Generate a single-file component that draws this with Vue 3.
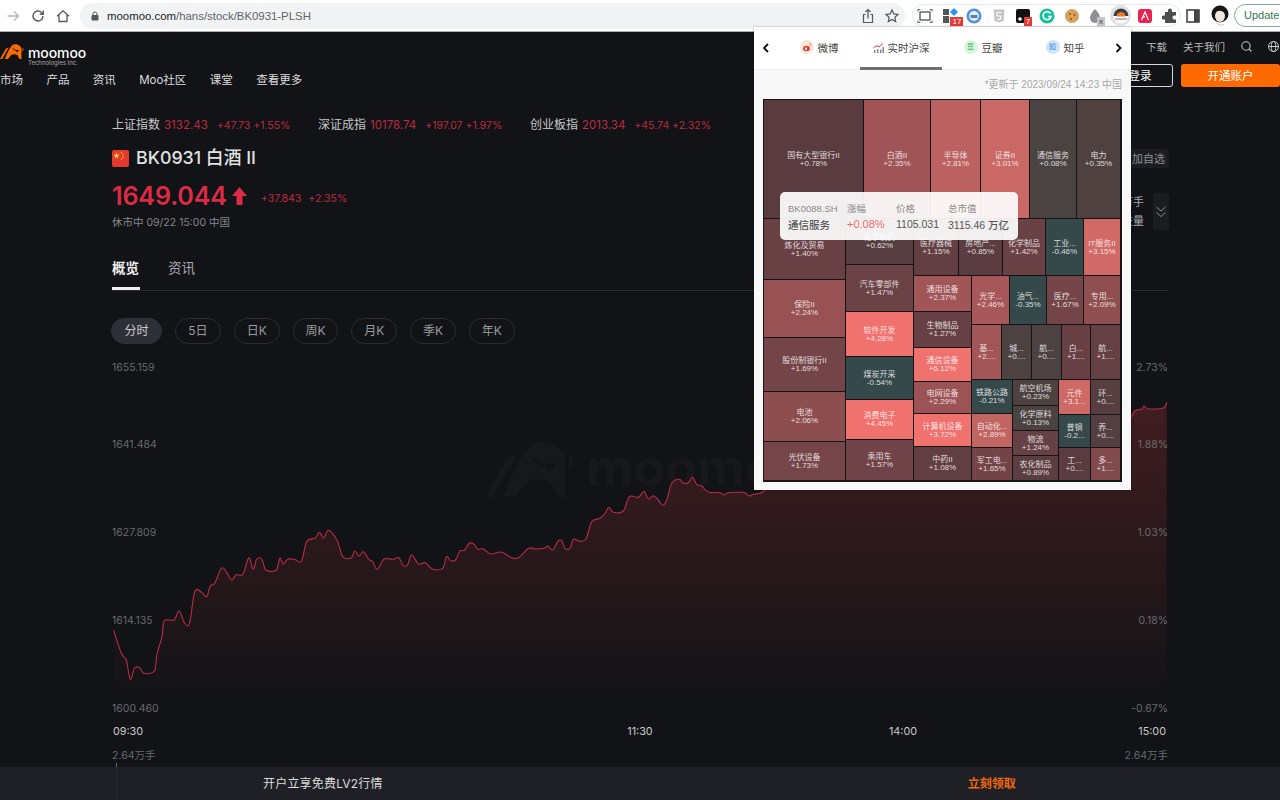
<template>
  <div class="page">
    <svg class="defs" width="0" height="0">
      <symbol id="bull" viewBox="0 0 272 175">
        <path d="M0 172L25 172L100 40L65 55Z" />
        <path fill-rule="evenodd" d="M55 172C75 120 100 60 130 25C150 3 190 -3 225 25C235 35 240 42 243 50L243 172L220 172L200 130C180 115 150 115 130 125L90 172ZM145 40C150 70 185 75 215 68L205 88L190 98L185 80C160 78 140 65 145 40Z" />
        <path d="M255 45C272 55 272 75 250 92C255 75 258 60 255 45Z" />
      </symbol>
    </svg>

    <!-- browser toolbar -->
    <div class="toolbar">
      <svg class="tb-nav" width="16" height="16" viewBox="0 0 16 16" fill="none" stroke="#b4b6b9" stroke-width="1.3"><path d="M2.5 8h11M9 3.5L13.5 8 9 12.5" /></svg>
      <svg class="tb-nav" width="16" height="16" viewBox="0 0 16 16" fill="none" stroke="#55585c" stroke-width="1.4"><path d="M13 8a5 5 0 1 1-1.5-3.6L13 6" /><path d="M13.3 2.6V6.2H9.8" /></svg>
      <svg class="tb-nav" width="16" height="16" viewBox="0 0 16 16" fill="none" stroke="#55585c" stroke-width="1.3"><path d="M2 8.2L8 2.8l6 5.4M4 7v6.5h8V7" /></svg>
      <div class="omnibox">
        <svg width="10" height="10" viewBox="0 0 10 10"><rect x="1.5" y="4" width="7" height="5.5" rx="1" fill="#55585c" /><path d="M3 4.5V3a2 2 0 0 1 4 0v1.5" fill="none" stroke="#55585c" stroke-width="1" /></svg>
        <span class="url"><b>moomoo.com</b>/hans/stock/BK0931-PLSH</span>
        <div class="omni-actions">
          <svg width="16" height="16" viewBox="0 0 16 16" fill="none" stroke="#55585c" stroke-width="1.2"><path d="M8 10.5V1.5M5.4 4L8 1.5 10.6 4M5.5 6.5H3.5v8h9v-8h-2" /></svg>
          <svg width="16" height="16" viewBox="0 0 16 16" fill="none" stroke="#55585c" stroke-width="1.2"><path d="M8 2l1.8 3.9 4.2.5-3.1 2.9.8 4.2L8 11.4l-3.7 2.1.8-4.2L2 6.400l4.2-.5z" /></svg>
        </div>
      </div>
      <div class="ext-pill">
        <span class="ext"><svg width="16" height="16" viewBox="0 0 16 16" fill="none"><rect x="3" y="4" width="10" height="8" stroke="#444" stroke-width="1.2" /><path d="M1 3.500V1.500h2.500M12.500 1.500H15v2M1 12.500v2h2.500M12.500 14.500H15v-2" stroke="#2f8f4f" stroke-width="1.2" /></svg></span>
        <span class="ext"><svg width="16" height="16" viewBox="0 0 16 16"><rect x="1" y="1" width="6" height="6" fill="#555" /><rect x="1" y="8" width="6" height="7" fill="#555" /><path d="M12 0l4 4-4 4-4-4z" fill="#2196f3" /></svg><i class="badge red">17</i></span>
        <span class="ext"><svg width="16" height="16" viewBox="0 0 16 16"><circle cx="8" cy="8" r="7.500" fill="#4f8fdc" /><circle cx="8" cy="8" r="5" fill="#e4eefa" /><rect x="4.500" y="7" width="7" height="3" fill="#5b7fa8" /></svg></span>
        <span class="ext"><svg width="16" height="16" viewBox="0 0 16 16"><path d="M2.500 1.500h11l-1 11.500L8 14.500 3.500 13z" fill="#c2c4c7" /><path d="M5.500 4.500h5M5.700 4.500l.3 3.500h4l-.3 3-1.700.6-1.700-.6" fill="none" stroke="#fff" stroke-width="1.100" /></svg></span>
        <span class="ext"><svg width="16" height="16" viewBox="0 0 16 16"><path d="M1 3a2 2 0 0 1 2-2h10a2 2 0 0 1 2 2v8a4 4 0 0 1-4 4H3a2 2 0 0 1-2-2z" fill="#111" /><circle cx="5" cy="11" r="1.800" fill="#fff" /></svg><i class="badge red">7</i></span>
        <span class="ext"><svg width="16" height="16" viewBox="0 0 16 16"><circle cx="8" cy="8" r="7.500" fill="#15c39a" /><path d="M11.500 5.500A4 4 0 1 0 12 8.500H9" fill="none" stroke="#fff" stroke-width="1.600" /></svg></span>
        <span class="ext"><svg width="16" height="16" viewBox="0 0 16 16"><circle cx="8" cy="8" r="7" fill="#d9a05b" /><circle cx="6" cy="6" r="1.100" fill="#8a5a26" /><circle cx="10.500" cy="7" r="1" fill="#8a5a26" /><circle cx="7" cy="11" r="1.100" fill="#8a5a26" /></svg></span>
        <span class="ext"><svg width="16" height="16" viewBox="0 0 16 16"><path d="M7 1C10 4 12 7 12 10a5 5 0 0 1-10 0C2 7 4 4 7 1z" fill="#8d9094" /></svg><i class="badge gray">x</i></span>
        <span class="ext active"><svg width="16" height="16" viewBox="0 0 16 16"><circle cx="8" cy="8" r="7.500" fill="#fff" /><path d="M.5 8a7.500 7.500 0 0 1 15 0z" fill="#3a3d42" /><path d="M3.500 8.500a4.500 4.500 0 0 1 9 0z" fill="#f07a1f" /><path d="M2 11h12" stroke="#9aa4ae" stroke-width="1.500" /></svg></span>
        <span class="ext"><svg width="16" height="16" viewBox="0 0 16 16"><rect x="1" y="1" width="14" height="14" rx="3" fill="#e8234f" /><path d="M4.500 12L8 4l3.500 8M6.500 9.500l1.500-1" fill="none" stroke="#fff" stroke-width="1.200" /></svg></span>
        <span class="ext"><svg width="16" height="16" viewBox="0 0 16 16"><path d="M6 2.500a2 2 0 0 1 4 0V4h4v3.500h-1.500a2 2 0 0 0 0 4H14V15H3v-3.500H1.500a2 2 0 0 1 0-4H3V4h3z" fill="#4a4d51" /></svg></span>
      </div>
      <svg class="tb-side" width="14" height="14" viewBox="0 0 14 14"><rect x="1" y="1" width="12" height="12" fill="none" stroke="#444" stroke-width="1.600" /><rect x="8" y="1" width="5" height="12" fill="#444" /></svg>
      <svg class="tb-avatar" width="18" height="22" viewBox="0 0 18 22"><circle cx="9" cy="9" r="8.500" fill="#151515" /><ellipse cx="9" cy="11" rx="5" ry="6" fill="#f2e6df" /><path d="M4 8C6 5 12 5 14 9L14 3 4 3z" fill="#151515" /><path d="M6 18c2 3 5 3 7 1" stroke="#b9b9b9" fill="none" /></svg>
      <div class="update-pill">Update</div>
    </div>

    <!-- site header -->
    <header class="site-header">
      <div class="site-left">
        <div class="brand">
          <svg class="brand-mark" width="24" height="17"><use href="#bull" /></svg>
          <div class="brand-text">
            <div class="brand-name">moomoo</div>
            <div class="brand-sub">Technologies Inc.</div>
          </div>
        </div>
        <nav class="main-nav">
          <span v-for="item in navItems" :key="item">{{ item }}</span>
        </nav>
      </div>
      <div class="site-right">
        <div class="site-links">
          <span>下载</span>
          <span>关于我们</span>
          <svg width="11" height="11" viewBox="0 0 11 11" fill="none" stroke="#c8c8c8" stroke-width="1.100"><circle cx="5" cy="5" r="4.200" /><path d="M8 8l2.500 2.500" /></svg>
          <svg width="11" height="11" viewBox="0 0 11 11" fill="none" stroke="#c8c8c8"><circle cx="5.500" cy="5.500" r="5" /><ellipse cx="5.500" cy="5.500" rx="2.200" ry="5" /><path d="M.5 5.500h10" /></svg>
        </div>
        <div class="site-buttons">
          <button class="btn-login">登录</button>
          <button class="btn-open">开通账户</button>
        </div>
      </div>
    </header>

    <main class="content">
      <div class="index-row">
        <div v-for="idx in indices" :key="idx.name" class="index-item" :style="{ width: idx.width + 'px' }">
          <span class="index-name">{{ idx.name }}</span>
          <span class="index-value">{{ idx.value }}</span>
          <span class="index-change">{{ idx.change }}</span>
        </div>
      </div>

      <div class="title-row">
        <div class="title-main">
          <svg width="17" height="17" viewBox="0 0 17 17"><rect width="17" height="17" rx="2" fill="#e23b2e" /><path d="M4.500 2.500l.8 2.300h2.400l-2 1.400.8 2.300-2-1.400-2 1.400.8-2.300-2-1.400h2.400z" fill="#ffd23f" /><circle cx="9.500" cy="2.500" r=".7" fill="#ffd23f" /><circle cx="11" cy="4.500" r=".7" fill="#ffd23f" /><circle cx="11" cy="7" r=".7" fill="#ffd23f" /><circle cx="9.500" cy="9" r=".7" fill="#ffd23f" /></svg>
          <h1>BK0931 白酒 II</h1>
        </div>
        <button class="btn-watch">+ 加自选</button>
      </div>

      <div class="quote-row">
        <div>
          <div class="price-line">
            <span class="price">1649.044</span>
            <svg class="price-arrow" width="15" height="18" viewBox="0 0 15 18"><path d="M7.500 0L15 9h-4.500v9h-6V9H0z" fill="#dc2b45" /></svg>
            <span class="price-change">+37.843</span>
            <span class="price-change">+2.35%</span>
          </div>
          <div class="market-status">休市中 09/22 15:00 中国</div>
        </div>
        <div class="quote-side">
          <div class="side-stats">
            <span>8.91万手</span>
            <span>成交量</span>
          </div>
          <div class="side-toggle">
            <svg width="10" height="12" viewBox="0 0 10 12" fill="none" stroke="#8a8c90"><path d="M.5 1L5 5 9.500 1M.5 6.500l4.500 4 4.500-4" /></svg>
          </div>
        </div>
      </div>

      <div class="tabs">
        <span class="tab tab-active">概览</span>
        <span class="tab">资讯</span>
      </div>

      <div class="ranges">
        <button v-for="(r, i) in ranges" :key="r" class="range" :class="{ 'range-active': i === 0 }">{{ r }}</button>
      </div>
    </main>

    <div class="chart-wrap">
      <svg class="chart" width="1280" height="423" viewBox="0 344 1280 423">
        <defs>
          <linearGradient id="areaFill" gradientUnits="userSpaceOnUse" x1="0" y1="402" x2="0" y2="705">
            <stop offset="0" stop-color="#411d20" />
            <stop offset="1" stop-color="#111316" />
          </linearGradient>
        </defs>
        <g fill="#16181b" class="watermark">
          <use href="#bull" x="485" y="440" width="90" height="58" />
          <text x="586" y="486" class="watermark-text">moomoo</text>
        </g>
        <path :d="areaPath" fill="url(#areaFill)" />
        <path :d="linePath" fill="none" stroke="#b92c43" stroke-width="1.100" />
        <text v-for="l in leftAxis" :key="l.t" x="112" :y="l.y" class="axis">{{ l.t }}</text>
        <text v-for="l in rightAxis" :key="l.t" x="1168" :y="l.y" text-anchor="end" class="axis">{{ l.t }}</text>
        <text x="113" y="735" class="time">09:30</text>
        <text x="640" y="735" text-anchor="middle" class="time">11:30</text>
        <text x="903" y="735" text-anchor="middle" class="time">14:00</text>
        <text x="1166" y="735" text-anchor="end" class="time">15:00</text>
        <text x="112" y="759" class="axis">2.64万手</text>
        <text x="1168" y="759" text-anchor="end" class="axis">2.64万手</text>
        <rect x="116" y="763" width="1" height="4" fill="#1f9d55" />
      </svg>
    </div>

    <div class="promo">
      <span class="promo-text">开户立享免费LV2行情</span>
      <span class="promo-link">立刻领取</span>
    </div>

    <!-- extension popup -->
    <section class="popup">
      <div class="popup-head">
        <svg class="arrow-l" width="8" height="10" viewBox="0 0 8 10" fill="none" stroke="#111" stroke-width="1.800"><path d="M6 1L2 5l4 4" /></svg>
        <div v-for="t in popupTabs" :key="t.name" class="ptab" :class="{ 'ptab-active': t.active }">
          <span v-if="t.badge" class="ptab-badge" :style="{ background: t.bg, color: t.fg }">{{ t.badge }}</span>
          <svg v-else-if="t.name === '微博'" width="14" height="14" viewBox="0 0 14 14"><circle cx="7" cy="7" r="7" fill="#f6e6dc" /><ellipse cx="6.500" cy="8.500" rx="3.500" ry="2.700" fill="#d9453a" /><circle cx="6" cy="8.700" r="1.100" fill="#fff" /><path d="M9 3.500a2 2 0 0 1 2 2.300" stroke="#e9963a" fill="none" /></svg>
          <svg v-else width="11" height="11" viewBox="0 0 11 11"><path d="M.5 6L4 3.500 6 5 10 1.500" fill="none" stroke="#dd3b4b" /><rect x="1" y="8" width="1.500" height="3" fill="#888" /><rect x="4" y="7" width="1.500" height="4" fill="#888" /><rect x="7" y="7.500" width="1.500" height="3.500" fill="#888" /><rect x="9.500" y="5" width="1.500" height="6" fill="#888" /></svg>
          <span class="ptab-name">{{ t.name }}</span>
        </div>
        <svg class="arrow-r" width="8" height="10" viewBox="0 0 8 10" fill="none" stroke="#111" stroke-width="1.800"><path d="M2 1l4 4-4 4" /></svg>
      </div>
      <div class="popup-body">
        <div class="updated">*更新于 2023/09/24 14:23 中国</div>
        <div class="treemap">
          <div v-for="c in cells" :key="c.name + c.x0 + c.y0" class="cell" :style="c.style">
            <span>{{ c.name }}</span>
            <span>{{ c.text }}</span>
          </div>
          <div class="tip">
            <span class="tip-head">BK0088.SH</span>
            <span class="tip-head">涨幅</span>
            <span class="tip-head">价格</span>
            <span class="tip-head">总市值</span>
            <span class="tip-val">通信服务</span>
            <span class="tip-val tip-red">+0.08%</span>
            <span class="tip-val">1105.031</span>
            <span class="tip-val">3115.46 万亿</span>
          </div>
        </div>
      </div>
    </section>
  </div>
</template>

<script setup>
const navItems = ['市场', '产品', '资讯', 'Moo社区', '课堂', '查看更多']

const indices = [
  { name: '上证指数', value: '3132.43', change: '+47.73 +1.55%', width: 206 },
  { name: '深证成指', value: '10178.74', change: '+197.07 +1.97%', width: 212 },
  { name: '创业板指', value: '2013.34', change: '+45.74 +2.32%', width: 200 }
]

const ranges = ['分时', '5日', '日K', '周K', '月K', '季K', '年K']

const leftAxis = [
  { t: '1655.159', y: 371 },
  { t: '1641.484', y: 448 },
  { t: '1627.809', y: 536 },
  { t: '1614.135', y: 624 },
  { t: '1600.460', y: 712 }
]
const rightAxis = [
  { t: '2.73%', y: 371 },
  { t: '1.88%', y: 448 },
  { t: '1.03%', y: 536 },
  { t: '0.18%', y: 624 },
  { t: '-0.67%', y: 712 }
]

// traced from the screenshot, split in three because each part was read at its own zoom
const morning = [[40,452],[62,520],[76,540],[88,598],[100,565],[115,563],[128,580],[158,573],[165,525],[180,470],[187,422],[215,420],[230,392],[245,428],[260,430],[275,335],[295,337],[310,350],[320,318],[333,310],[350,268],[362,268],[382,300],[395,284],[415,283],[432,233],[445,268],[455,237],[470,237],[482,270],[512,270],[522,234],[532,253],[545,238],[565,238],[585,244],[600,185],[625,174],[637,157],[650,175],[663,151],[688,180],[705,230],[730,233],[740,212],[752,228],[765,215],[780,238],[792,245],[805,268],[825,237],[850,238],[868,233],[880,256],[893,255],[905,224],[925,252],[945,248],[965,267],[995,265],[1006,230],[1018,242],[1032,240],[1045,213],[1058,211],[1072,190],[1085,192],[1098,208],[1112,206],[1135,222],[1165,216],[1195,233],[1215,233],[1245,205],[1265,207],[1290,205],[1300,198],[1315,210],[1330,183],[1342,183],[1350,205],[1365,205],[1375,178],[1395,184],[1412,176]]
  .map(([x, y]) => [100 + x / 2.904, 480 + y / 3])
const midday = [[365,545],[390,535],[405,520],[417,502],[430,517],[460,513],[478,470],[505,472],[522,454],[535,477],[550,467],[565,480],[578,496],[590,480],[605,430],[628,418],[640,430],[655,428],[668,412],[680,433],[695,438],[715,456],[750,458],[760,465],[775,458],[810,457],[825,458],[838,468],[850,463],[870,460]]
  .map(([x, y]) => [470 + x / 3, 340 + y / 3])
const closing = [[35,228],[45,212],[65,208],[72,198],[85,206],[130,204],[140,187]]
  .map(([x, y]) => [1120 + x / 3, 340 + y / 3])
// the stretch behind the popup is never seen, the extra points keep the curve from overshooting
const hidden = [[764, 491], [768, 486], [1122, 420], [1126, 419]]
const points = [...morning, ...midday, ...hidden, ...closing]

const smooth = (pts) => {
  let d = `M${pts[0][0].toFixed(1)} ${pts[0][1].toFixed(1)}`
  for (let i = 0; i < pts.length - 1; i++) {
    const p0 = pts[i - 1] || pts[i]
    const p1 = pts[i]
    const p2 = pts[i + 1]
    const p3 = pts[i + 2] || p2
    const c1 = [p1[0] + (p2[0] - p0[0]) / 6, p1[1] + (p2[1] - p0[1]) / 6]
    const c2 = [p2[0] - (p3[0] - p1[0]) / 6, p2[1] - (p3[1] - p1[1]) / 6]
    d += `C${c1[0].toFixed(1)} ${c1[1].toFixed(1)} ${c2[0].toFixed(1)} ${c2[1].toFixed(1)} ${p2[0].toFixed(1)} ${p2[1].toFixed(1)}`
  }
  return d
}
// drop the overshoot on the long hidden span by drawing it straight
const linePath = smooth(points.slice(0, morning.length + midday.length + 2)) +
  `L1122 420` + smooth(points.slice(morning.length + midday.length + 2)).replace('M', 'L')
const areaPath = `${linePath}L${points[points.length - 1][0].toFixed(1)} 705L${points[0][0].toFixed(1)} 705Z`

const popupTabs = [
  { name: '微博' },
  { name: '实时沪深', active: true },
  { name: '豆瓣', badge: '豆', bg: '#d8f8da', fg: '#2fa24a' },
  { name: '知乎', badge: '知', bg: '#cfe4fb', fg: '#2f86e6' }
]

const stops = [
  [0, [72, 68, 66]],
  [0.8, [90, 60, 64]],
  [1.5, [108, 66, 70]],
  [1.75, [118, 70, 73]],
  [2.05, [140, 78, 80]],
  [2.35, [160, 84, 87]],
  [3, [200, 104, 100]],
  [3.7, [240, 114, 110]]
]
const heat = (p) => {
  if (p < 0) return '#35494a'
  if (p >= 3.7) return 'rgb(240,114,110)'
  let i = 0
  while (stops[i + 1][0] < p) i++
  const [a, ca] = stops[i]
  const [b, cb] = stops[i + 1]
  const t = (p - a) / (b - a)
  return `rgb(${ca.map((v, k) => Math.round(v + (cb[k] - v) * t)).join(',')})`
}

// x0, y0, x1, y1 (page px), name, label, value
const raw = [
  [764,100,864,219,'国有大型银行II','+0.78%',0.78],
  [864,100,931,219,'白酒II','+2.35%',2.35],
  [931,100,981,219,'半导体','+2.81%',2.81],
  [981,100,1030,219,'证券II','+3.01%',3.01],
  [1030,100,1077,219,'通信服务','+0.08%',0.08],
  [1077,100,1121,219,'电力','+0.35%',0.35],

  [764,219,846,280,'炼化及贸易','+1.40%',1.4],
  [764,280,846,338,'保险II','+2.24%',2.24],
  [764,338,846,392,'股份制银行II','+1.69%',1.69],
  [764,392,846,442,'电池','+2.06%',2.06],
  [764,442,846,481,'光伏设备','+1.73%',1.73],

  [846,219,914,265,'化学制药','+0.62%',0.62],
  [846,265,914,312,'汽车零部件','+1.47%',1.47],
  [846,312,914,357,'软件开发','+4.28%',4.28],
  [846,357,914,400,'煤炭开采','-0.54%',-0.54],
  [846,400,914,440,'消费电子','+4.45%',4.45],
  [846,440,914,481,'乘用车','+1.57%',1.57],

  [914,219,959,276,'医疗器械','+1.15%',1.15],
  [959,219,1003,276,'房地产...','+0.85%',0.85],
  [1003,219,1046,276,'化学制品','+1.42%',1.42],
  [1046,219,1084,276,'工业...','-0.46%',-0.46],
  [1084,219,1121,276,'IT服务II','+3.15%',3.15],

  [914,276,972,312,'通用设备','+2.37%',2.37],
  [914,312,972,348,'生物制品','+1.27%',1.27],
  [914,348,972,382,'通信设备','+6.12%',6.12],
  [914,382,972,414,'电网设备','+2.29%',2.29],
  [914,414,972,447,'计算机设备','+3.72%',3.72],
  [914,447,972,481,'中药II','+1.08%',1.08],

  [972,276,1010,325,'光学...','+2.46%',2.46],
  [1010,276,1047,325,'油气...','-0.35%',-0.35],
  [1047,276,1084,325,'医疗...','+1.67%',1.67],
  [1084,276,1121,325,'专用...','+2.09%',2.09],

  [972,325,1002,380,'基...','+2....',2.4],
  [1002,325,1032,380,'城...','+0....',0.2],
  [1032,325,1062,380,'航...','+0....',0.2],
  [1062,325,1091,380,'白...','+1....',1.3],
  [1091,325,1121,380,'航...','+1....',1.2],

  [972,380,1013,414,'铁路公路','-0.21%',-0.21],
  [972,414,1013,448,'自动化...','+2.89%',2.89],
  [972,448,1013,481,'军工电...','+1.65%',1.65],

  [1013,380,1059,406,'航空机场','+0.23%',0.23],
  [1013,406,1059,431,'化学原料','+0.13%',0.13],
  [1013,431,1059,456,'物流','+1.24%',1.24],
  [1013,456,1059,481,'农化制品','+0.89%',0.89],

  [1059,380,1091,415,'元件','+3.1...',3.1],
  [1059,415,1091,448,'普钢','-0.2...',-0.2],
  [1059,448,1091,481,'工...','+0....',0.8],
  [1091,380,1121,415,'环...','+0....',0.6],
  [1091,415,1121,448,'养...','+0....',0.5],
  [1091,448,1121,481,'多...','+1....',1.9]
]

const cells = raw.map(([x0, y0, x1, y1, name, text, pct]) => ({
  x0,
  y0,
  name,
  text,
  style: {
    left: `${x0 - 763}px`,
    top: `${y0 - 99}px`,
    width: `${x1 - x0 - 1}px`,
    height: `${y1 - y0 - 1}px`,
    background: heat(pct)
  }
}))
</script>

<style>
html, body {
  margin: 0;
  background: #111316;
}
</style>

<style scoped>
.page {
  position: relative;
  width: 1280px;
  height: 800px;
  overflow: hidden;
  display: flex;
  flex-direction: column;
  background: #111316;
  color: #ddd;
  font-family: Inter, "Noto Sans CJK SC", sans-serif;
}
.defs {
  position: absolute;
}

/* browser toolbar */
.toolbar {
  flex: none;
  box-sizing: border-box;
  height: 32px;
  display: flex;
  align-items: center;
  background: #fff;
  border-bottom: 1px solid #aeb0b3;
  padding-left: 5px;
}
.toolbar svg {
  flex: none;
}
.tb-nav {
  margin-right: 9px;
}
.omnibox {
  flex: none;
  box-sizing: border-box;
  width: 825px;
  height: 26px;
  border-radius: 13px;
  background: #f1f3f4;
  display: flex;
  align-items: center;
  padding: 0 5px 0 10px;
  font-family: "Liberation Sans", sans-serif;
  font-size: 11.4px;
}
.url {
  margin-left: 7px;
  color: #5f6368;
}
.url b {
  font-weight: 400;
  color: #202124;
}
.omni-actions {
  margin-left: auto;
  display: flex;
  gap: 8px;
}
.ext-pill {
  flex: none;
  box-sizing: border-box;
  margin-left: 7px;
  width: 269px;
  height: 23px;
  border: 1px solid #e6e7e8;
  border-radius: 12px;
  display: flex;
  align-items: center;
}
.ext {
  position: relative;
  flex: none;
  width: 24.45px;
  height: 21px;
  display: flex;
  align-items: center;
  justify-content: center;
}
.ext.active {
  background: #dfe1e5;
  border-radius: 50%;
  width: 21px;
  margin: 0 1.7px;
}
.badge {
  position: absolute;
  left: 13px;
  top: 12px;
  height: 9px;
  padding: 0 2px;
  font: 8px/9px "Liberation Sans", sans-serif;
  color: #fff;
}
.badge.red {
  background: #e53935;
}
.badge.gray {
  background: #c4c6c8;
  color: #444;
}
.tb-side {
  margin-left: 5px;
}
.tb-avatar {
  margin-left: 11px;
}
.update-pill {
  box-sizing: border-box;
  margin-left: 5px;
  flex: none;
  width: 60px;
  height: 23px;
  border: 1px solid #7fae8e;
  border-radius: 12px;
  padding-left: 9px;
  font: 11px/21px "Liberation Sans", sans-serif;
  color: #2f7a4d;
}

/* site header */
.site-header {
  flex: none;
  height: 84px;
  display: flex;
  justify-content: space-between;
}
.brand {
  display: flex;
  height: 28px;
  padding-top: 11px;
  gap: 4px;
}
.brand-mark {
  fill: #ff6a00;
}
.brand-text {
  margin-top: 1px;
}
.brand-name {
  font-size: 14px;
  font-weight: 500;
  letter-spacing: -0.1px;
  line-height: 17px;
  color: #fff;
}
.brand-sub {
  font-size: 6px;
  line-height: 7px;
  margin-top: -2px;
  color: #aaa;
  white-space: nowrap;
}
.main-nav {
  display: flex;
  gap: 23.4px;
  margin-top: 1px;
  font-size: 11.5px;
  line-height: 16px;
  color: #ddd;
}
.site-right {
  display: flex;
  flex-direction: column;
  align-items: flex-end;
}
.site-links {
  display: flex;
  align-items: center;
  gap: 16px;
  height: 14px;
  margin-top: 7px;
  padding-right: 1px;
  font-size: 10.5px;
  color: #b8b8b8;
}
.site-buttons {
  display: flex;
  gap: 8px;
  margin-top: 11px;
}
.site-buttons button {
  height: 23px;
  box-sizing: border-box;
  border-radius: 3px;
  font: 11.5px "Noto Sans CJK SC", sans-serif;
  color: #fff;
  padding: 0 0 2px;
}
.btn-login {
  width: 66px;
  background: transparent;
  border: 1px solid #d8d8d8;
}
.btn-open {
  width: 99px;
  background: #ff6a00;
  border: 0;
}

/* quote area */
.content {
  flex: none;
  box-sizing: border-box;
  width: 1280px;
  padding: 0 112px;
}
.index-row {
  display: flex;
  height: 16px;
  margin-top: -1px;
  line-height: 16px;
}
.index-item {
  flex: none;
  white-space: nowrap;
}
.index-name {
  font-size: 12px;
  color: #c8c8c8;
}
.index-value {
  margin-left: 4px;
  font-size: 11.5px;
  color: #bf2a40;
}
.index-change {
  margin-left: 9px;
  font-size: 10.5px;
  color: #bf2a40;
}
.title-row {
  margin-top: 18px;
  height: 19px;
  display: flex;
  align-items: center;
  justify-content: space-between;
}
.title-main {
  display: flex;
  align-items: center;
  gap: 7px;
}
.title-main h1 {
  margin: 0;
  padding-bottom: 2px;
  font-size: 17.8px;
  font-weight: 500;
  line-height: 19px;
  color: #e2e2e2;
}
.btn-watch {
  box-sizing: border-box;
  margin-right: -1px;
  width: 58px;
  height: 19px;
  border: 0;
  border-radius: 3px;
  background: #1b1d20;
  color: #8f9195;
  font: 11px "Noto Sans CJK SC", sans-serif;
  padding: 0 4px 2px 0;
  text-align: right;
}
.quote-row {
  margin-top: 13px;
  display: flex;
  justify-content: space-between;
}
.price-line {
  display: flex;
  align-items: center;
  height: 30px;
}
.price {
  font-size: 25.2px;
  font-weight: 600;
  letter-spacing: -0.2px;
  color: #dc2b45;
}
.price-arrow {
  margin: 0 14px 0 5px;
}
.price-change {
  margin-top: 5px;
  margin-right: 7px;
  font-size: 10.5px;
  color: #bf2a40;
}
.market-status {
  margin-top: 5px;
  font-size: 10.5px;
  line-height: 14px;
  color: #85878b;
}
.quote-side {
  display: flex;
  gap: 9px;
  margin: 12px -1px 0 0;
  height: 37px;
}
.side-stats {
  display: flex;
  flex-direction: column;
  justify-content: space-between;
  align-items: flex-end;
  font-size: 11px;
  line-height: 18px;
  color: #a6a8ac;
}
.side-toggle {
  width: 16px;
  border-radius: 3px;
  background: #1b1d20;
  display: flex;
  align-items: center;
  justify-content: center;
}
.tabs {
  box-sizing: border-box;
  margin-top: 28px;
  height: 33px;
  display: flex;
  gap: 28px;
  border-bottom: 1px solid #26282c;
}
.tab {
  box-sizing: border-box;
  height: 32px;
  width: 28px;
  white-space: nowrap;
  font-size: 13.5px;
  line-height: 21.5px;
  color: #a6a8ac;
}
.tab-active {
  font-weight: 600;
  color: #eee;
  border-bottom: 3px solid #eee;
}
.ranges {
  margin: 27px 0 0 -1px;
  display: flex;
  gap: 13px;
}
.range {
  box-sizing: border-box;
  width: 45.8px;
  height: 26px;
  border: 1px solid #2b2d31;
  border-radius: 13px;
  background: transparent;
  color: #9a9ca0;
  font: 12px Inter, "Noto Sans CJK SC", sans-serif;
  padding: 0 0 3px;
}
.range-active {
  width: 51px;
  background: #2d3036;
  border-color: #2d3036;
  color: #c9cbcf;
}

/* chart */
.chart-wrap {
  flex: 1;
  min-height: 0;
  overflow: hidden;
}
.chart {
  display: block;
}
.watermark-text {
  font-size: 52px;
  font-weight: 700;
}
.axis {
  font-size: 10.5px;
  fill: #68696d;
}
.time {
  font-size: 10.8px;
  fill: #c9c9c9;
}
.promo {
  position: relative;
  flex: none;
  box-sizing: border-box;
  height: 33px;
  padding: 0 0 2px 263px;
  background: #1e2025;
  display: flex;
  align-items: center;
  gap: 585px;
  font-size: 12px;
}
.promo::before {
  content: "";
  position: absolute;
  left: 116px;
  top: 0;
  bottom: 0;
  width: 1px;
  background: #26282d;
}
.promo-text {
  color: #dcdcdc;
  letter-spacing: 0.2px;
}
.promo-link {
  color: #f0670f;
  font-weight: 600;
}

/* popup */
.popup {
  position: absolute;
  left: 754px;
  top: 27px;
  z-index: 5;
  width: 377px;
  height: 463px;
  background: #f8f8f8;
  box-shadow: 0 0 2px rgba(0, 0, 0, 0.35);
  font-family: "Liberation Sans", "Noto Sans CJK SC", sans-serif;
}
.popup-head {
  box-sizing: border-box;
  height: 43px;
  background: #fff;
  border-bottom: 1px solid #f0f0f0;
  display: flex;
  align-items: center;
}
.arrow-l {
  width: 24px;
  flex: none;
}
.arrow-r {
  width: 25px;
  flex: none;
}
.ptab {
  box-sizing: border-box;
  flex: none;
  width: 82px;
  height: 43px;
  padding-top: 1px;
  display: flex;
  align-items: center;
  justify-content: center;
  gap: 4px;
  border-bottom: 3px solid transparent;
}
.ptab-active {
  border-bottom-color: #707070;
}
.ptab-badge {
  width: 14px;
  height: 14px;
  border-radius: 50%;
  font-size: 7px;
  line-height: 14px;
  text-align: center;
}
.ptab-name {
  font-size: 10.5px;
  color: #444;
}
.popup-body {
  padding: 9px 9px 0;
}
.updated {
  text-align: right;
  font-size: 10px;
  line-height: 12px;
  color: #a8a8a8;
}
.treemap {
  position: relative;
  margin-top: 8px;
  width: 359px;
  height: 383px;
  background: #141414;
}
.cell {
  box-sizing: border-box;
  padding-top: 1px;
  position: absolute;
  display: flex;
  flex-direction: column;
  align-items: center;
  justify-content: center;
  overflow: hidden;
  white-space: nowrap;
  font-size: 8px;
  line-height: 8px;
  color: rgba(255, 255, 255, 0.82);
}
.tip {
  position: absolute;
  left: 17px;
  top: 93px;
  box-sizing: border-box;
  width: 238px;
  height: 48px;
  padding: 9px 0 0 8px;
  border-radius: 5px;
  background: rgba(255, 255, 255, 0.92);
  display: grid;
  grid-template-columns: 59px 49px 52px auto;
  grid-template-rows: 14px 18px;
  align-items: center;
}
.tip-head {
  font-size: 9.5px;
  color: #8a8a8a;
}
.tip-val {
  font-size: 10.5px;
  font-weight: 500;
  color: #555;
  white-space: nowrap;
}
.tip-red {
  color: #ee6d6b;
  font-size: 11px;
}
</style>
